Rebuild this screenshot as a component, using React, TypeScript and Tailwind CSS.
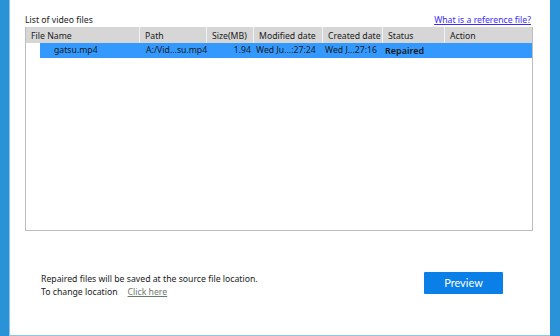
import React from 'react';

const COLS = ['File Name', 'Path', 'Size(MB)', 'Modified date', 'Created date', 'Status', 'Action'];

const GRID = 'grid grid-cols-[114px_67px_47px_69px_60px_62px_1fr]';

export default function App() {
  return (
    <div className="flex h-[336px] w-[560px] overflow-hidden bg-white font-['Noto_Sans',sans-serif] text-[8.7px] text-[#1a1a1a]">
      <div className="w-[9px] shrink-0 bg-[#2a93d8]" />
      <div className="flex flex-1 flex-col border-b border-l border-[#8cc4ee] pl-[15px] pr-[17px]">
        <div className="mt-[14px] flex items-end justify-between">
          <span className="leading-[12px]">List of video files</span>
          <a className="mr-[2px] leading-[12px] text-[#3b2bff] underline">What is a reference file?</a>
        </div>
        <div className="mt-[1px] flex h-[204px] flex-col border border-t-0 border-[#bdbdbd]">
          <div className={`${GRID} h-[16px] bg-[#d6d6d6]`}>
            {COLS.map((c, i) => (
              <div
                key={c}
                className={`flex items-center overflow-hidden whitespace-nowrap pl-[5px] pt-[1px] leading-[16px] ${i < COLS.length - 1 ? 'border-r border-[#f2f2f2]' : ''}`}
              >
                {c}
              </div>
            ))}
          </div>
          <div className="ml-[14px] grid h-[15px] grid-cols-[100px_67px_47px_69px_60px_62px_1fr] items-center whitespace-nowrap bg-[#3399ff] leading-[15px]">
            <span className="pl-[14px]">gatsu.mp4</span>
            <span className="pl-[6px]">A:/Vid...su.mp4</span>
            <span className="pr-[3px] text-right">1.94</span>
            <span className="pl-[2px]">Wed Ju...:27:24</span>
            <span className="pl-[2px]">Wed J...27:16</span>
            <span className="pl-[2px] text-[9px] font-semibold">Repaired</span>
            <span />
          </div>
        </div>
        <div className="mt-[41px] flex items-start justify-between">
          <div className="ml-[16px] mt-[1px] flex flex-col gap-[1px] leading-[12px]">
            <span>Repaired files will be saved at the source file location.</span>
            <span>
              To change location
              <a className="ml-[10px] text-[#6b7a6b] underline">Click here</a>
            </span>
          </div>
          <button className="mr-[30px] h-[22px] w-[79px] rounded-[1px] bg-[#0a7fe8] font-['Lato',sans-serif] text-[11px] text-white">
            Preview
          </button>
        </div>
      </div>
      <div className="w-[10px] shrink-0 bg-[#2a93d8]" />
    </div>
  );
}
